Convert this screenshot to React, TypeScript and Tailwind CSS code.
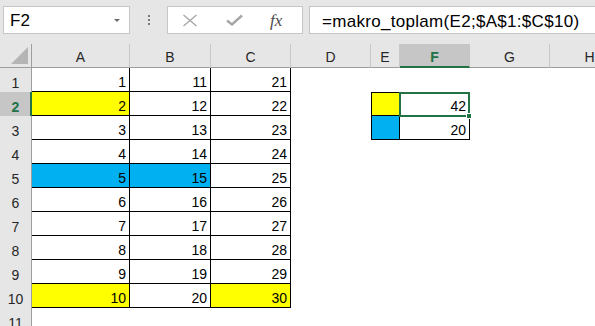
import React from 'react';

const cols = ['A', 'B', 'C', 'D', 'E', 'F', 'G', 'H'];
const rows = [1, 2, 3, 4, 5, 6, 7, 8, 9, 10, 11];
const gridCols = 'grid grid-cols-[32px_98px_81px_80px_80px_29px_70px_80px_80px]';

// cell values for the little table
const values: Record<string, string> = {};
for (let r = 1; r <= 10; r++) {
  values[`A${r}`] = String(r);
  values[`B${r}`] = String(r + 10);
  values[`C${r}`] = String(r + 20);
}
values['F2'] = '42';
values['F3'] = '20';

const fills: Record<string, string> = {
  A2: 'bg-[#ffff00]',
  A5: 'bg-[#00b0f0]',
  B5: 'bg-[#00b0f0]',
  A10: 'bg-[#ffff00]',
  C10: 'bg-[#ffff00]',
  E2: 'bg-[#ffff00]',
  E3: 'bg-[#00b0f0]',
};

const borderFor = (c: string, r: number) => {
  if (['A', 'B', 'C'].includes(c) && r <= 10) return 'border-r border-b border-black';
  if (c === 'E' && (r === 2 || r === 3)) return `border-l border-r border-b border-black ${r === 2 ? 'border-t' : ''}`;
  if (c === 'F' && (r === 2 || r === 3)) return `border-r border-b border-black ${r === 2 ? 'border-t' : ''}`;
  return '';
};

const FormulaBar = () => (
  <div className="h-[44px] flex items-start pt-[6px]">
    <div className="ml-[3px] w-[127px] h-[28px] bg-white border border-[#c6c6c6] flex items-center pl-[6px] pr-[9px]">
      <span className="text-[17px] text-black flex-1 leading-none">F2</span>
      <div className="w-0 h-0 border-l-[3px] border-r-[3px] border-t-[3px] border-l-transparent border-r-transparent border-t-[#6a6a6a]" />
    </div>
    <div className="w-[37px] h-[28px] flex flex-col items-center justify-center gap-[2px] pl-[1px]">
      <div className="w-[2px] h-[2px] bg-[#7a7a7a]" />
      <div className="w-[2px] h-[2px] bg-[#7a7a7a]" />
      <div className="w-[2px] h-[2px] bg-[#7a7a7a]" />
    </div>
    <div className="w-[136px] h-[28px] bg-white border border-[#c6c6c6] flex items-center">
      <svg width="16" height="13" viewBox="0 0 16 13" className="ml-[14px]">
        <path d="M1.5 1 L14.5 12 M14.5 1 L1.5 12" stroke="#a6a6a6" strokeWidth="1.3" fill="none" />
      </svg>
      <svg width="17" height="12" viewBox="0 0 17 12" className="ml-[28px]">
        <path d="M1 6.5 L6 10.5 L16 1.5" stroke="#a6a6a6" strokeWidth="2.4" fill="none" />
      </svg>
      <span className="ml-[27px] text-[17px] italic text-[#4a4a4a] leading-none" style={{ fontFamily: '"Liberation Serif", serif' }}>fx</span>
    </div>
    <div className="ml-[6px] flex-1 h-[28px] bg-white border border-[#c6c6c6] border-r-0 flex items-center pl-[12px] pt-[2px]">
      <span className="text-[17px] tracking-[0.3px] text-black leading-none whitespace-nowrap">=makro_toplam(E2;$A$1:$C$10)</span>
    </div>
  </div>
);

const HeaderRow = () => (
  <div className={`${gridCols} h-[24px]`}>
    <div className="relative border-r border-b border-[#9e9e9e]">
      <svg width="17" height="17" viewBox="0 0 17 17" className="absolute right-[3px] bottom-[3px]">
        <path d="M17 0 L17 17 L0 17 Z" fill="#b5b5b5" />
      </svg>
    </div>
    {cols.map((c) => (
      <div
        key={c}
        className={
          c === 'F'
            ? 'bg-[#c6c6c6] border-r border-r-[#c6c6c6] border-b-2 border-b-[#217346] flex items-end justify-center pb-[2px] text-[14px] font-bold text-[#217346] leading-none'
            : 'border-r border-r-[#c8c8c8] border-b border-b-[#9e9e9e] flex items-end justify-center pb-[3px] text-[14px] text-[#262626] leading-none'
        }
      >
        {c}
      </div>
    ))}
  </div>
);

const App = () => {
  return (
    <div
      className="w-[595px] h-[326px] overflow-hidden bg-[#e6e6e6]"
      style={{ fontFamily: '"Liberation Sans", Arial, sans-serif' }}
    >
      <FormulaBar />
      <HeaderRow />
      {rows.map((r) => (
        <div key={r} className={`${gridCols} h-[24px]`}>
          <div
            className={
              r === 2
                ? 'bg-[#c6c6c6] border-r-2 border-[#217346] flex items-end justify-center pb-[2px] pl-[1px] text-[14px] font-bold text-[#217346] leading-none'
                : 'bg-[#e6e6e6] border-r border-[#9e9e9e] flex items-end justify-center pb-[2px] text-[14px] text-[#262626] leading-none'
            }
          >
            {r}
          </div>
          {cols.map((c) => {
            const id = `${c}${r}`;
            return (
              <div
                key={id}
                className={`relative flex items-end justify-end pr-[3px] pb-[2px] text-[14px] text-black leading-none ${fills[id] || 'bg-white'} ${borderFor(c, r)}`}
              >
                {values[id]}
                {id === 'F2' && (
                  <>
                    <div className="absolute -left-[1px] -top-[1px] -right-[1px] -bottom-[2px] border-2 border-[#217346] z-10" />
                    <div className="absolute -right-[3px] -bottom-[4px] w-[6px] h-[6px] bg-[#217346] border border-white z-20" />
                  </>
                )}
              </div>
            );
          })}
        </div>
      ))}
    </div>
  );
};

export default App;
